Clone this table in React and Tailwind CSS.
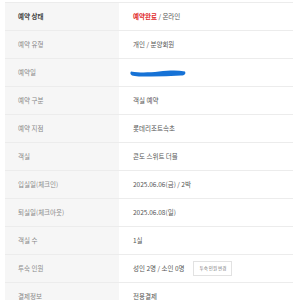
import React from "react";

const rows = [
  { label: "예약 상태", strong: true, value: "status" },
  { label: "예약 유형", value: "개인 / 분양회원" },
  { label: "예약일", value: "masked" },
  { label: "예약 구분", value: "객실 예약" },
  { label: "예약 지점", value: "롯데리조트속초" },
  { label: "객실", value: "콘도 스위트 더블" },
  { label: "입실일(체크인)", value: "2025.06.06(금) / 2박" },
  { label: "퇴실일(체크아웃)", value: "2025.06.08(일)" },
  { label: "객실 수", value: "1실" },
  { label: "투숙 인원", value: "guests" },
  { label: "결제정보", value: "전용결제" },
];

function Value({ v }) {
  if (v === "status")
    return (
      <span>
        <span className="font-bold text-[#e0292b]">예약완료</span>
        <span className="text-[#555]"> / 온라인</span>
      </span>
    );
  if (v === "masked")
    return (
      <svg width="58" height="10" viewBox="0 0 58 10" className="-ml-[4px]">
        <path
          d="M2 3.5 C12 5 20 4.5 30 3.5 C40 2.5 48 2 56 3.5 C57 5.5 56 7.5 52 7.5 C42 8 32 8.5 22 8.5 C12 8.5 6 8.5 3 7.5 C1 6.5 1 4.5 2 3.5 Z"
          fill="#1672d6"
        />
      </svg>
    );
  if (v === "guests")
    return (
      <div className="flex items-center">
        <span className="text-[#555]">성인 2명 / 소인 0명</span>
        <span className="ml-[9px] flex h-[15px] w-[39px] items-center justify-center border border-[#e2e2e2] bg-white text-[4.5px] text-[#777]">
          투숙 인원 변경
        </span>
      </div>
    );
  return <span className="text-[#555]">{v}</span>;
}

export default function App() {
  return (
    <div
      className="h-[300px] w-[300px] overflow-hidden bg-white pt-[2px] pl-[5px]"
      style={{ fontFamily: '"Noto Sans CJK KR", "Noto Sans", sans-serif' }}
    >
      <div className="w-[288px] border-t border-[#ececec]">
        {rows.map((r, i) => (
          <div
            key={i}
            className="grid h-[28px] grid-cols-[114px_1fr] border-b border-[#ececec] text-[6.5px]"
          >
            <div
              className={
                "flex items-center bg-[#f6f6f6] pl-[13px] " +
                (r.strong ? "font-bold text-[#444]" : "text-[#888]")
              }
            >
              {r.label}
            </div>
            <div className="flex items-center pl-[14px]">
              <Value v={r.value} />
            </div>
          </div>
        ))}
      </div>
    </div>
  );
}
